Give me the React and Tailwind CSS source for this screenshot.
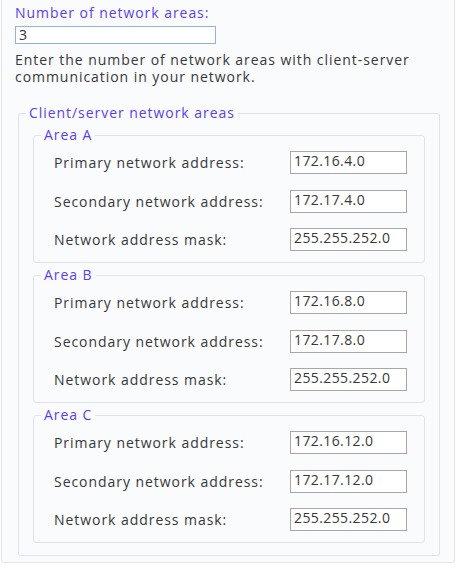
import React from "react";

const areas = [
  { name: "Area A", p: "172.16.4.0", s: "172.17.4.0", m: "255.255.252.0" },
  { name: "Area B", p: "172.16.8.0", s: "172.17.8.0", m: "255.255.252.0" },
  { name: "Area C", p: "172.16.12.0", s: "172.17.12.0", m: "255.255.252.0" },
];

function Row({ label, value }) {
  return (
    <div className="flex items-center h-[23px]">
      <span className="ml-[20px] w-[236px] shrink-0 whitespace-nowrap text-[#383838]">{label}</span>
      <div className="w-[117px] h-[23px] shrink-0 border border-[#a7a7a7] bg-white pl-[3px] leading-[17px] tracking-[0.4px] text-[#383838] whitespace-nowrap overflow-hidden">
        {value}
      </div>
    </div>
  );
}

function Area({ a }) {
  return (
    <fieldset className="mx-[14px] border border-[#dfe4ea] rounded-[3px] pb-[11px]">
      <legend className="ml-[7px] px-[3px] text-[#5b3ff0] leading-[16px]">{a.name}</legend>
      <div className="flex flex-col gap-[15.5px] pt-[8px]">
        <Row label="Primary network address:" value={a.p} />
        <Row label="Secondary network address:" value={a.s} />
        <Row label="Network address mask:" value={a.m} />
      </div>
    </fieldset>
  );
}

export default function App() {
  return (
    <div
      className="w-[461px] h-[571px] bg-white text-[14px] tracking-[0.95px]"
      style={{ fontFamily: '"Open Sans", "Noto Sans", sans-serif' }}
    >
      <div className="ml-[1px] w-[454px] h-[563px] border-x border-b border-[#e3e7ec] bg-[#fafbfd] rounded-b-[3px] pt-[4px]">
        <div className="ml-[13px] text-[#5b3ff0] leading-[18px]">Number of network areas:</div>
        <div className="ml-[13px] mt-[4px] w-[201px] h-[18px] border border-[#8fb3e6] bg-white pl-[3px] leading-[16px] text-[#333]">
          3
        </div>
        <div className="ml-[13px] mt-[8px] w-[425px] text-[#383838] leading-[16.5px]">
          Enter the number of network areas with client-server communication in your network.
        </div>
        <fieldset className="ml-[16px] mt-[20px] w-[422px] border border-[#dfe4ea] rounded-[3px] pb-[12px]">
          <legend className="ml-[7px] px-[3px] text-[#5b3ff0] leading-[16px]">
            Client/server network areas
          </legend>
          <div className="flex flex-col gap-[4px] pt-[6px]">
            {areas.map((a) => (
              <Area key={a.name} a={a} />
            ))}
          </div>
        </fieldset>
      </div>
    </div>
  );
}
